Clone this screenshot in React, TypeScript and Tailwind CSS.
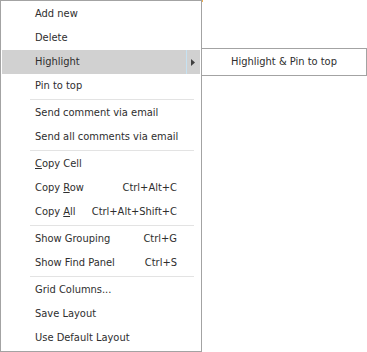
import React from "react";

type Item = {
  label: React.ReactNode;
  shortcut?: string;
  active?: boolean;
  submenu?: boolean;
};

const groups: Item[][] = [
  [
    { label: "Add new" },
    { label: "Delete" },
    { label: "Highlight", active: true, submenu: true },
    { label: "Pin to top" },
  ],
  [{ label: "Send comment via email" }, { label: "Send all comments via email" }],
  [
    { label: <><u>C</u>opy Cell</> },
    { label: <>Copy <u>R</u>ow</>, shortcut: "Ctrl+Alt+C" },
    { label: <>Copy <u>A</u>ll</>, shortcut: "Ctrl+Alt+Shift+C" },
  ],
  [
    { label: "Show Grouping", shortcut: "Ctrl+G" },
    { label: "Show Find Panel", shortcut: "Ctrl+S" },
  ],
  [{ label: "Grid Columns..." }, { label: "Save Layout" }, { label: "Use Default Layout" }],
];

function MenuRow({ item }: { item: Item }) {
  return (
    <div className="flex h-6 items-stretch">
      <div
        className={`flex w-[184px] items-center justify-between pl-[33px] pr-[9px] pt-px ${
          item.active ? "bg-[#d1d1d1]" : ""
        }`}
      >
        <span className="whitespace-nowrap">{item.label}</span>
        {item.shortcut && <span className="whitespace-nowrap">{item.shortcut}</span>}
      </div>
      <div className={`w-px ${item.active ? "bg-[#c6e2f2]" : ""}`} />
      <div className={`flex flex-1 items-center pl-[4px] ${item.active ? "bg-[#d1d1d1]" : ""}`}>
        {item.submenu && (
          <svg width="4" height="7" viewBox="0 0 4 7">
            <path d="M0 0 L4 3.5 L0 7 Z" fill="#404040" />
          </svg>
        )}
      </div>
    </div>
  );
}

export default function App() {
  return (
    <div
      className="relative h-[352px] w-[367px] bg-white text-[11px] text-[#2e2e2e]"
      style={{ fontFamily: '"DejaVu Sans Condensed", "Liberation Sans", Arial, sans-serif' }}
    >
      {/* main popup */}
      <div className="flex h-[352px] w-[202px] flex-col border border-[#a3a3a3] bg-white p-px">
        {groups.map((group, gi) => (
          <div key={gi}>
            {gi > 0 && (
              <div className="flex h-[3px] items-center">
                <div className="ml-[28px] h-px w-[164px] bg-[#e3e3e3]" />
              </div>
            )}
            {group.map((item, ii) => (
              <MenuRow key={ii} item={item} />
            ))}
          </div>
        ))}
      </div>

      {/* submenu */}
      <div className="absolute left-[201px] top-[48px] flex h-[28px] w-[166px] items-center justify-center border border-[#a3a3a3] bg-white pt-px">
        Highlight &amp; Pin to top
      </div>

      <div className="absolute left-[202px] top-0 h-[2px] w-px bg-[#f0b050]" />
    </div>
  );
}
